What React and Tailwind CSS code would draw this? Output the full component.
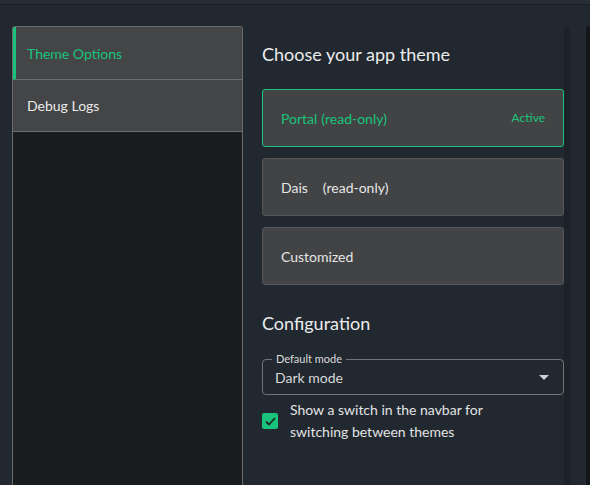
import { useState } from 'react';

const themes = [
  { id: 'portal', name: 'Portal', note: '(read-only)' },
  { id: 'dais', name: 'Dais', note: '(read-only)', gap: true },
  { id: 'custom', name: 'Customized' },
];

function ThemeCard({ theme, active, onSelect }) {
  return (
    <button
      type="button"
      onClick={onSelect}
      className={`flex h-[58px] w-full items-center justify-between rounded-[3px] border bg-[#424344] pl-[18px] pr-[18px] text-left text-[14px] ${
        active ? 'border-[#19c37d] text-[#19c37d]' : 'border-[#56575a] text-[#e6e6e6]'
      }`}
    >
      <span>
        {theme.name}
        {theme.note && (
          <span className={theme.gap ? 'ml-[15px]' : 'ml-[4px]'}>{theme.note}</span>
        )}
      </span>
      {active && <span className="text-[12px]">Active</span>}
    </button>
  );
}

export default function App() {
  const [tab, setTab] = useState('theme');
  const [activeTheme, setActiveTheme] = useState('portal');
  const [showSwitch, setShowSwitch] = useState(true);

  return (
    <div
      className="flex h-[485px] w-[590px] flex-col overflow-hidden bg-[#212830] text-[#e6e6e6]"
      style={{ fontFamily: 'Lato, "Noto Sans", sans-serif' }}
    >
      <div className="h-[4px] bg-[#282e36]" />
      <div className="h-[1px] bg-[#1b1f24]" />

      <div className="flex flex-1 pt-[21px]">
        {/* side nav */}
        <nav className="ml-[12px] flex w-[231px] flex-col overflow-hidden rounded-t-[3px] border border-b-0 border-[#6a6b6d] bg-[#191c1f]">
          {[
            { id: 'theme', label: 'Theme Options', h: 'h-[53px]' },
            { id: 'debug', label: 'Debug Logs', h: 'h-[52px]' },
          ].map((item) => (
            <button
              key={item.id}
              type="button"
              onClick={() => setTab(item.id)}
              className={`flex ${item.h} items-center border-b border-[#6a6b6d] bg-[#444546] text-left text-[14px] ${
                tab === item.id
                  ? 'border-l-[3px] border-l-[#19c37d] pl-[11px] text-[#19c37d]'
                  : 'pl-[14px] text-[#eaeaea]'
              }`}
            >
              {item.label}
            </button>
          ))}
        </nav>

        {/* settings pane */}
        <main className="ml-[19px] flex w-[302px] flex-col">
          <h2 className="mt-[17px] text-[18px] leading-[22px] text-[#ececec]">Choose your app theme</h2>

          <div className="mt-[24px] flex flex-col gap-[11px]">
            {themes.map((t) => (
              <ThemeCard
                key={t.id}
                theme={t}
                active={activeTheme === t.id}
                onSelect={() => setActiveTheme(t.id)}
              />
            ))}
          </div>

          <h2 className="mt-[27px] text-[18px] leading-[22px] text-[#ececec]">Configuration</h2>

          <div className="relative mt-[25px] flex h-[36px] items-center justify-between rounded-[4px] border border-[#727477] pl-[12px] pr-[14px]">
            <span className="absolute left-[9px] top-[-7px] bg-[#212830] px-[4px] text-[11px] leading-[12px] text-[#dcdcdc]">
              Default mode
            </span>
            <span className="pt-[1px] text-[14px] text-[#d8d8d8]">Dark mode</span>
            <svg width="10" height="5" viewBox="0 0 10 5">
              <path d="M0 0 L10 0 L5 5 Z" fill="#d0d0d0" />
            </svg>
          </div>

          <label className="mt-[4px] flex items-center gap-[12px]">
            <button
              type="button"
              onClick={() => setShowSwitch(!showSwitch)}
              className={`flex h-[16px] w-[16px] shrink-0 items-center justify-center rounded-[2px] ${
                showSwitch ? 'bg-[#19c37d]' : 'border border-[#999]'
              }`}
            >
              {showSwitch && (
                <svg width="11" height="9" viewBox="0 0 11 9">
                  <path d="M1 4.5 L4 7.5 L10 1" fill="none" stroke="#1a2a22" strokeWidth="1.8" />
                </svg>
              )}
            </button>
            <span className="text-[14px] leading-[22px] text-[#e3e3e3]">
              Show a switch in the navbar for
              <br />
              switching between themes
            </span>
          </label>
        </main>

        {/* scroll gutters */}
        <div className="w-[6px] rounded-t-[3px] bg-[#1d2128]" />
        <div className="ml-[16px] w-[4px] rounded-tl-[3px] bg-[#141619]" />
      </div>
    </div>
  );
}
